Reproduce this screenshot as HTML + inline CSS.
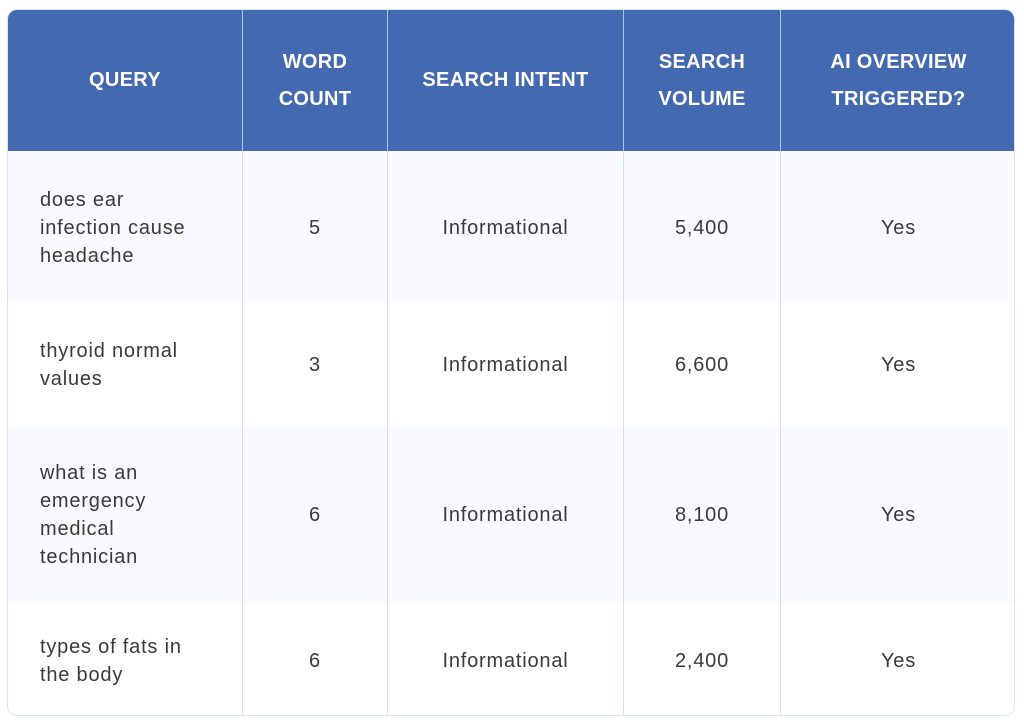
<!DOCTYPE html>
<html><head><style>
body{margin:0;width:1024px;height:725px;background:#fff;font-family:"Liberation Sans",sans-serif;overflow:hidden}
.t{position:absolute;left:7px;top:9px;width:1008px;height:707px;border:1px solid #d6e4f7;border-radius:10px;overflow:hidden;box-sizing:border-box}
.c{position:absolute;display:flex;align-items:center;justify-content:center;text-align:center;box-sizing:border-box;border-right:1.5px solid #cfe0f8;color:#3a3a3a;font-size:20px;line-height:28px;letter-spacing:0.8px;padding-top:1px}
.h{background:#4369b0;color:#fff;font-weight:bold;font-size:20px;line-height:37px;letter-spacing:0.3px;border-right:1.5px solid #a9c4ee;padding-top:0}
.q{justify-content:flex-start;text-align:left;padding-left:32px;padding-right:10px}
.last{border-right:none}
</style></head><body>
<div class="t">
<div class="c h" style="left:0;top:0;width:235px;height:141px">QUERY</div>
<div class="c h" style="left:235px;top:0;width:145px;height:141px">WORD<br>COUNT</div>
<div class="c h" style="left:380px;top:0;width:236px;height:141px">SEARCH INTENT</div>
<div class="c h" style="left:616px;top:0;width:157px;height:141px">SEARCH<br>VOLUME</div>
<div class="c h last" style="left:773px;top:0;width:235px;height:141px">AI OVERVIEW<br>TRIGGERED?</div>

<div style="position:absolute;left:0;top:141px;width:1008px;height:152px;background:#f8faff"></div>
<div style="position:absolute;left:0;top:415px;width:1008px;height:178px;background:#f8faff"></div>

<div class="c q" style="left:0;top:141px;width:235px;height:152px">does ear<br>infection cause<br>headache</div>
<div class="c" style="left:235px;top:141px;width:145px;height:152px">5</div>
<div class="c" style="left:380px;top:141px;width:236px;height:152px">Informational</div>
<div class="c" style="left:616px;top:141px;width:157px;height:152px">5,400</div>
<div class="c last" style="left:773px;top:141px;width:235px;height:152px">Yes</div>

<div class="c q" style="left:0;top:293px;width:235px;height:122px">thyroid normal<br>values</div>
<div class="c" style="left:235px;top:293px;width:145px;height:122px">3</div>
<div class="c" style="left:380px;top:293px;width:236px;height:122px">Informational</div>
<div class="c" style="left:616px;top:293px;width:157px;height:122px">6,600</div>
<div class="c last" style="left:773px;top:293px;width:235px;height:122px">Yes</div>

<div class="c q" style="left:0;top:415px;width:235px;height:178px">what is an<br>emergency<br>medical<br>technician</div>
<div class="c" style="left:235px;top:415px;width:145px;height:178px">6</div>
<div class="c" style="left:380px;top:415px;width:236px;height:178px">Informational</div>
<div class="c" style="left:616px;top:415px;width:157px;height:178px">8,100</div>
<div class="c last" style="left:773px;top:415px;width:235px;height:178px">Yes</div>

<div class="c q" style="left:0;top:593px;width:235px;height:114px">types of fats in<br>the body</div>
<div class="c" style="left:235px;top:593px;width:145px;height:114px">6</div>
<div class="c" style="left:380px;top:593px;width:236px;height:114px">Informational</div>
<div class="c" style="left:616px;top:593px;width:157px;height:114px">2,400</div>
<div class="c last" style="left:773px;top:593px;width:235px;height:114px">Yes</div>
</div>
</body></html>
